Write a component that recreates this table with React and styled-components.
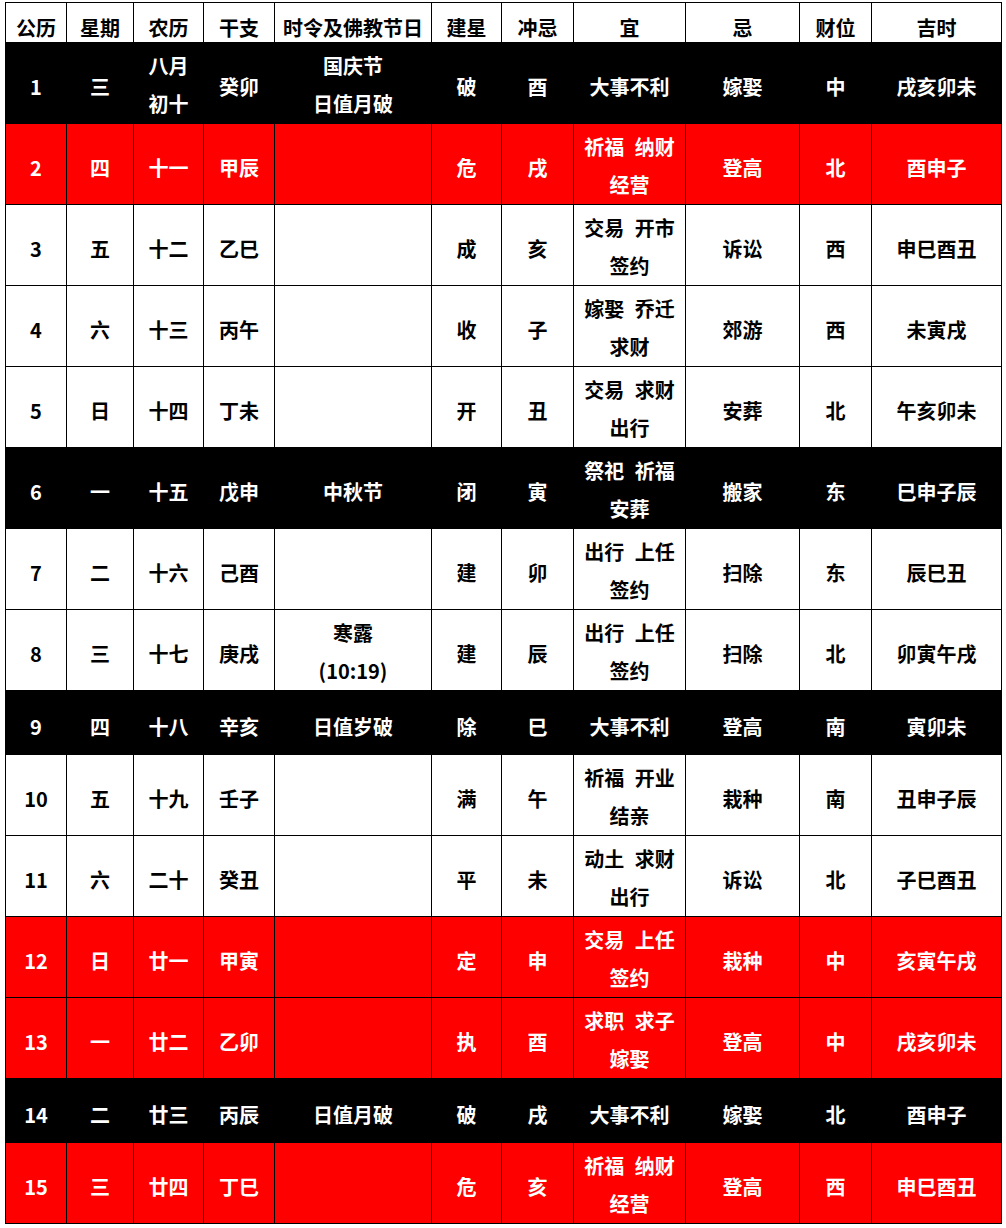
import React from "react";
import styled, { createGlobalStyle } from "styled-components";

const GlobalStyle = createGlobalStyle`
  html, body {
    margin: 0;
    padding: 0;
    background: #fff;
  }
  body {
    font-family: "Noto Sans CJK SC", "Microsoft YaHei", sans-serif;
  }
`;

const columns = [
  { title: "公历", width: 61 },
  { title: "星期", width: 67 },
  { title: "农历", width: 70 },
  { title: "干支", width: 71 },
  { title: "时令及佛教节日", width: 157 },
  { title: "建星", width: 70 },
  { title: "冲忌", width: 72 },
  { title: "宜", width: 112 },
  { title: "忌", width: 114 },
  { title: "财位", width: 72 },
  { title: "吉时", width: 130 },
];

// tone: dark = 黑底, red = 红底, plain = 白底
const days = [
  { tone: "dark", cells: ["1", "三", ["八月", "初十"], "癸卯", ["国庆节", "日值月破"], "破", "酉", "大事不利", "嫁娶", "中", "戌亥卯未"] },
  { tone: "red", cells: ["2", "四", "十一", "甲辰", "", "危", "戌", ["祈福 纳财", "经营"], "登高", "北", "酉申子"] },
  { tone: "plain", cells: ["3", "五", "十二", "乙巳", "", "成", "亥", ["交易 开市", "签约"], "诉讼", "西", "申巳酉丑"] },
  { tone: "plain", cells: ["4", "六", "十三", "丙午", "", "收", "子", ["嫁娶 乔迁", "求财"], "郊游", "西", "未寅戌"] },
  { tone: "plain", cells: ["5", "日", "十四", "丁未", "", "开", "丑", ["交易 求财", "出行"], "安葬", "北", "午亥卯未"] },
  { tone: "dark", cells: ["6", "一", "十五", "戊申", "中秋节", "闭", "寅", ["祭祀 祈福", "安葬"], "搬家", "东", "巳申子辰"] },
  { tone: "plain", cells: ["7", "二", "十六", "己酉", "", "建", "卯", ["出行 上任", "签约"], "扫除", "东", "辰巳丑"] },
  { tone: "plain", cells: ["8", "三", "十七", "庚戌", ["寒露", "(10:19)"], "建", "辰", ["出行 上任", "签约"], "扫除", "北", "卯寅午戌"] },
  { tone: "dark", short: true, cells: ["9", "四", "十八", "辛亥", "日值岁破", "除", "巳", "大事不利", "登高", "南", "寅卯未"] },
  { tone: "plain", cells: ["10", "五", "十九", "壬子", "", "满", "午", ["祈福 开业", "结亲"], "栽种", "南", "丑申子辰"] },
  { tone: "plain", cells: ["11", "六", "二十", "癸丑", "", "平", "未", ["动土 求财", "出行"], "诉讼", "北", "子巳酉丑"] },
  { tone: "red", cells: ["12", "日", "廿一", "甲寅", "", "定", "申", ["交易 上任", "签约"], "栽种", "中", "亥寅午戌"] },
  { tone: "red", cells: ["13", "一", "廿二", "乙卯", "", "执", "酉", ["求职 求子", "嫁娶"], "登高", "中", "戌亥卯未"] },
  { tone: "dark", short: true, cells: ["14", "二", "廿三", "丙辰", "日值月破", "破", "戌", "大事不利", "嫁娶", "北", "酉申子"] },
  { tone: "red", cells: ["15", "三", "廿四", "丁巳", "", "危", "亥", ["祈福 纳财", "经营"], "登高", "西", "申巳酉丑"] },
];

const tones = {
  dark: { bg: "#000000", fg: "#ffffff" },
  red: { bg: "#ff0000", fg: "#ffffff" },
  plain: { bg: "#ffffff", fg: "#000000" },
};

export default function App() {
  return (
    <>
      <GlobalStyle />
      <Page>
        <Calendar>
          <colgroup>
            {columns.map((c) => (
              <col key={c.title} style={{ width: c.width }} />
            ))}
          </colgroup>
          <thead>
            <HeadRow>
              {columns.map((c) => (
                <HeadCell key={c.title}>{c.title}</HeadCell>
              ))}
            </HeadRow>
          </thead>
          <tbody>
            {days.map((d) => (
              <DayRow key={d.cells[0]} $tone={d.tone} $short={d.short}>
                {d.cells.map((v, i) =>
                  Array.isArray(v) ? (
                    <Cell key={i} $multi>
                      {v.map((line) => (
                        <Line key={line}>{line}</Line>
                      ))}
                    </Cell>
                  ) : (
                    <Cell key={i}>{v}</Cell>
                  )
                )}
              </DayRow>
            ))}
          </tbody>
        </Calendar>
      </Page>
    </>
  );
}

const Page = styled.div`
  padding: 2px 0 0 5px;
`;

const Calendar = styled.table`
  width: 996px;
  table-layout: fixed;
  border-collapse: collapse;
  font-family: "Noto Sans CJK SC", "Microsoft YaHei", sans-serif;
  font-weight: 700;
  font-size: 20px;
`;

const HeadRow = styled.tr`
  height: 40px;
  background: #fff;
  color: #000;
`;

const HeadCell = styled.th`
  border: 1px solid #000;
  padding: 9px 0 0;
  text-align: center;
  vertical-align: middle;
  line-height: 29px;
  font-weight: 700;
  white-space: nowrap;
`;

const DayRow = styled.tr`
  height: ${({ $short }) => ($short ? "64px" : "81px")};
  background: ${({ $tone }) => tones[$tone].bg};
  color: ${({ $tone }) => tones[$tone].fg};
`;

const Cell = styled.td`
  border: 1px solid #000;
  padding: ${({ $multi }) => ($multi ? "4px 0 0" : "8px 0 0")};
  text-align: center;
  vertical-align: middle;
  line-height: 30px;
  word-spacing: 6px;
  white-space: nowrap;
`;

const Line = styled.div`
  line-height: 38px;
`;
